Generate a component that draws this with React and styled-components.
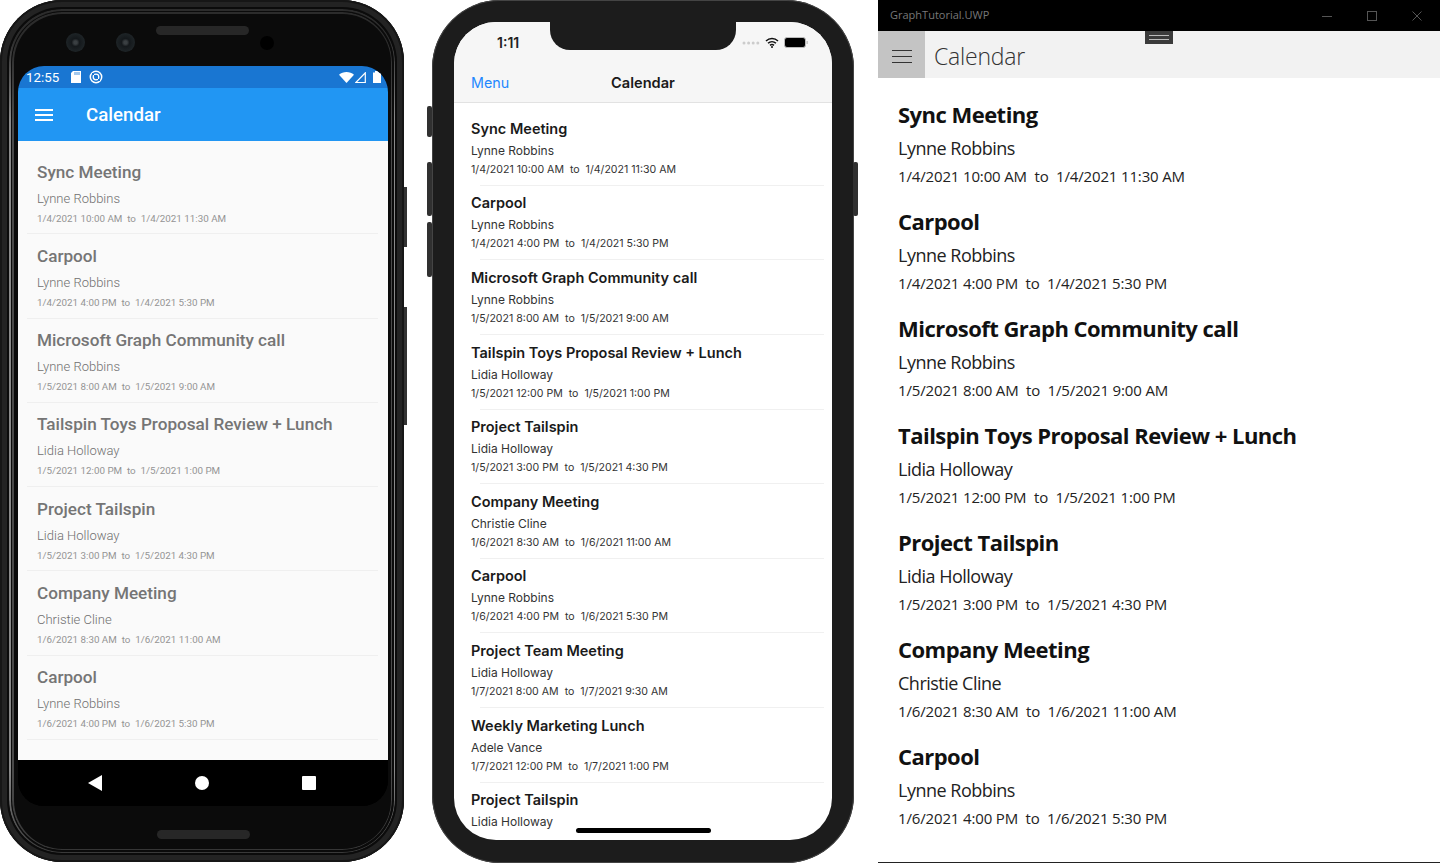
import React from "react";
import styled, { createGlobalStyle } from "styled-components";

const events = [
  ["Sync Meeting", "Lynne Robbins", "1/4/2021 10:00 AM", "1/4/2021 11:30 AM"],
  ["Carpool", "Lynne Robbins", "1/4/2021 4:00 PM", "1/4/2021 5:30 PM"],
  ["Microsoft Graph Community call", "Lynne Robbins", "1/5/2021 8:00 AM", "1/5/2021 9:00 AM"],
  ["Tailspin Toys Proposal Review + Lunch", "Lidia Holloway", "1/5/2021 12:00 PM", "1/5/2021 1:00 PM"],
  ["Project Tailspin", "Lidia Holloway", "1/5/2021 3:00 PM", "1/5/2021 4:30 PM"],
  ["Company Meeting", "Christie Cline", "1/6/2021 8:30 AM", "1/6/2021 11:00 AM"],
  ["Carpool", "Lynne Robbins", "1/6/2021 4:00 PM", "1/6/2021 5:30 PM"],
];
const iosEvents = [
  ...events,
  ["Project Team Meeting", "Lidia Holloway", "1/7/2021 8:00 AM", "1/7/2021 9:30 AM"],
  ["Weekly Marketing Lunch", "Adele Vance", "1/7/2021 12:00 PM", "1/7/2021 1:00 PM"],
  ["Project Tailspin", "Lidia Holloway", "", ""],
];

const Global = createGlobalStyle`
  html, body { margin: 0; padding: 0; background: #fff; }
  body { width: 1440px; height: 863px; overflow: hidden; }
  * { box-sizing: border-box; }
`;
const Page = styled.div`
  width: 1440px; height: 863px; display: flex; align-items: flex-start; background: #fff; overflow: hidden;
`;

/* ---------- Android ---------- */
const AndroidDevice = styled.div`
  position: relative; flex: none; width: 404px; height: 862px; border-radius: 62px;
  background: #0b0b0b; display: flex; flex-direction: column; padding: 0 16px 0 18px;
  box-shadow: inset 0 0 0 2px #161616, inset 0 0 0 7px #232323;
`;
const Rim = styled.div`
  position: absolute; pointer-events: none; inset: ${p => p.$inset}px; border-radius: ${p => 62 - p.$inset}px;
  padding: 1.5px;
  background: linear-gradient(to bottom, #2c2c2c 0, #2c2c2c 30px, ${p => p.$color} 110px, ${p => p.$color} 760px, #333 850px);
  -webkit-mask: linear-gradient(#000 0 0) content-box, linear-gradient(#000 0 0);
  mask: linear-gradient(#000 0 0) content-box, linear-gradient(#000 0 0);
  -webkit-mask-composite: xor;
  mask-composite: exclude;
`;
const AndroidKey = styled.div`
  position: absolute; left: 404px; width: 3px; background: #333;
  top: ${p => p.$top}px; height: ${p => p.$h}px;
`;
const CameraBar = styled.div`
  height: 66px; flex: none; position: relative;
  display: flex; align-items: flex-start; padding: 33px 0 0 48px;
`;
const Lens = styled.div`
  width: 19px; height: 19px; border-radius: 50%; margin-right: 31px; flex: none;
  background: radial-gradient(circle, #3a3f42 0 12%, #14181b 30%, #1e2427 70%, #15181a 100%);
`;
const Speaker = styled.div`
  width: 93px; height: 9px; border-radius: 5px; background: #272727; margin: -7px 0 0 -10px; flex: none;
`;
const FrontDot = styled.div`
  width: 14px; height: 14px; border-radius: 50%; background: #000; margin: 3px 0 0 11px; flex: none;
`;
const AndroidScreen = styled.div`
  width: 370px; height: 740px; flex: none; border-radius: 26px; overflow: hidden;
  display: flex; flex-direction: column; background: #000;
`;
const StatusBar = styled.div`
  height: 22px; flex: none; background: #1976d2; display: flex; align-items: center;
  padding: 0 7px 0 8px; color: #fff; font: 400 13.3px Roboto, sans-serif;
`;
const StatusIcons = styled.div`
  display: flex; align-items: center; gap: 8px; margin-left: 12px;
`;
const StatusRight = styled.div`
  display: flex; align-items: center; gap: 1px; margin-left: auto;
  & > svg:last-child { margin-left: 6px; }
`;
const Toolbar = styled.div`
  height: 53px; flex: none; background: #2196f3; display: flex; align-items: center;
  padding-left: 17px; gap: 33px; color: #fff; font: 500 18.7px Roboto, sans-serif;
`;
const AndroidList = styled.div`
  height: 619px; flex: none; background: #fafafa; padding: 9px 0 0 19px; overflow: hidden;
`;
const AndroidItem = styled.div`
  height: 84.25px; margin-right: 10px; border-bottom: 1px solid #efefef; margin-left: -10px;
  padding: 9.5px 0 0 10px; display: flex; flex-direction: column;
`;
const AndroidTitle = styled.div`
  font: 500 17.15px/25px Roboto, sans-serif; color: #757575; white-space: nowrap;
`;
const AndroidName = styled.div`
  font: 300 13px/18px Roboto, sans-serif; color: #6f6f6f; margin-top: 5px; white-space: nowrap;
`;
const AndroidDate = styled.div`
  font: 400 9.8px/14px Roboto, sans-serif; color: #949494; margin-top: 4px; white-space: pre;
`;
const NavBar = styled.div`
  height: 46px; flex: none; background: #000; display: flex; align-items: center; padding-left: 23.5px;
`;
const NavSlot = styled.div`
  width: 107px; display: flex; justify-content: center; flex: none;
`;
const ChinBar = styled.div`
  flex: 1; display: flex; justify-content: center; align-items: flex-start; padding-top: 24px;
`;
const ChinSpeaker = styled(Speaker)`margin: 0;`;

/* ---------- iPhone ---------- */
const IphoneSlot = styled.div`
  flex: none; margin-left: 28px; position: relative; width: 422px; height: 863px;
`;
const IphoneBody = styled.div`
  width: 422px; height: 863px; border-radius: 68px; background: #1c1c1c; padding: 22px;
  box-shadow: inset 0 0 0 1px #444;
`;
const SideKey = styled.div`
  position: absolute; width: 5px; background: #303030; border-radius: 2px;
  top: ${p => p.$top}px; height: ${p => p.$h}px;
  ${p => (p.$right ? "left: 421px;" : "left: -5px;")}
`;
const IphoneScreen = styled.div`
  position: relative; width: 378px; height: 818px; border-radius: 42px; overflow: hidden; background: #fff;
`;
const Notch = styled.div`
  position: absolute; left: 96px; top: 0; width: 186px; height: 28px; background: #1c1c1c;
  border-radius: 0 0 20px 20px;
`;
const IosHeader = styled.div`
  height: 81px; background: #f6f6f6; border-bottom: 1px solid #e2e2e2; display: flex; flex-direction: column;
`;
const IosStatus = styled.div`
  height: 41px; flex: none; display: flex; align-items: center; padding: 0 24px 0 43px;
  font: 600 14px Inter, sans-serif; color: #222;
`;
const IosStatusRight = styled.div`
  margin-left: auto; display: flex; align-items: center; gap: 5px;
`;
const IosNav = styled.div`
  flex: 1; position: relative; display: flex; align-items: center; justify-content: center;
  font: 600 14.6px Inter, sans-serif; color: #1a1a1a;
`;
const MenuLink = styled.span`
  position: absolute; left: 17px; top: 50%; transform: translateY(-50%); margin-top: -1px;
  font: 400 14.3px Inter, sans-serif; color: #1e88ff;
`;
const IosList = styled.div`
  padding-top: 13.8px;
`;
const IosItem = styled.div`
  height: 74.6px; padding-left: 17px; position: relative; display: flex; flex-direction: column;
`;
const IosDivider = styled.div`
  position: absolute; left: 26px; right: 8px; top: 68px; height: 1px; background: #f0f0f0;
`;
const IosTitle = styled.div`
  font: 600 14.5px/24px Inter, sans-serif; color: #1a1a1a; white-space: nowrap;
`;
const IosName = styled.div`
  font: 400 12px/16px Inter, sans-serif; color: #333; margin-top: 2px; white-space: nowrap;
`;
const IosDate = styled.div`
  font: 400 10.6px/14px Inter, sans-serif; color: #333; margin-top: 4px; white-space: pre;
`;
const HomeBar = styled.div`
  position: absolute; left: 122px; bottom: 7px; width: 135px; height: 5px; border-radius: 3px; background: #000;
`;

/* ---------- UWP ---------- */
const Win = styled.div`
  flex: none; margin-left: 24px; width: 562px; height: 863px; background: #fff; position: relative;
  display: flex; flex-direction: column; border-bottom: 1px solid #222;
`;
const TitleBar = styled.div`
  height: 31px; flex: none; background: #000; display: flex; align-items: center; padding: 0 1px 2px 12px;
  font: 400 11px "Open Sans", sans-serif; color: #777;
`;
const WinButtons = styled.div`
  margin-left: auto; display: flex; align-items: center; margin-bottom: -2px;
`;
const WinButton = styled.div`
  width: 45px; height: 31px; display: flex; align-items: center; justify-content: center;
`;
const WinHeader = styled.div`
  height: 47px; flex: none; background: #f2f2f2; display: flex; align-items: stretch;
`;
const HamburgerCell = styled.div`
  width: 47px; background: #c4c4c4; display: flex; align-items: center; justify-content: center; flex: none;
  padding-top: 3px;
`;
const WinHeading = styled.div`
  font: 300 23px/47px "Open Sans", sans-serif; color: #333; margin-left: 9px; padding-top: 2px; letter-spacing: -.2px;
`;
const DragHandle = styled.div`
  position: absolute; left: 267px; top: 31px; width: 28px; height: 13px; background: #3b3b3b;
  display: flex; align-items: center; justify-content: center;
  &::after { content: ""; width: 20px; height: 3px; border-top: 1px solid #bbb; border-bottom: 1px solid #bbb; }
`;
const WinList = styled.div`
  padding: 20px 0 0 20px;
`;
const WinItem = styled.div`
  height: 107px; display: flex; flex-direction: column;
`;
const WinTitle = styled.div`
  font: 700 22px/32px "Open Sans", sans-serif; color: #111; white-space: pre; letter-spacing: -.53px;
`;
const WinName = styled.div`
  font: 400 18px/26px "Open Sans", sans-serif; color: #222; margin-top: 5px; white-space: nowrap; letter-spacing: -.5px;
`;
const WinDate = styled.div`
  font: 400 15px/22px "Open Sans", sans-serif; color: #222; margin-top: 4px; white-space: pre; letter-spacing: -.15px;
`;

const Hamburger = ({ w, gap, stroke, color }) => (
  <svg width={w} height={gap * 2 + stroke} viewBox={`0 0 ${w} ${gap * 2 + stroke}`}>
    {[0, 1, 2].map(i => <rect key={i} x="0" y={i * gap} width={w} height={stroke} fill={color} />)}
  </svg>
);

export default function App() {
  return (
    <Page>
      <Global />
      <AndroidDevice>
        <Rim $inset={9} $color="#8a8a8a" />
        <Rim $inset={12} $color="#4a4a4a" />
        <AndroidKey $top={187} $h={60} />
        <AndroidKey $top={307} $h={118} />
        <CameraBar>
          <Lens /><Lens />
          <Speaker />
          <FrontDot />
        </CameraBar>
        <AndroidScreen>
          <StatusBar>
            12:55
            <StatusIcons>
              <svg width="10" height="12" viewBox="0 0 10 12"><path d="M2 0h8v12H0V2z" fill="#fff" /><path d="M4 1v3M6 1v3M8 1v3" stroke="#1976d2" strokeWidth=".8" /></svg>
              <svg width="14" height="14" viewBox="0 0 14 14"><circle cx="7" cy="7" r="5.7" fill="none" stroke="#fff" strokeWidth="1.5" /><circle cx="7" cy="7" r="2.8" fill="none" stroke="#fff" strokeWidth="1.3" /><path d="M3 3l8 8" stroke="#1976d2" strokeWidth="1" /></svg>
            </StatusIcons>
            <StatusRight>
              <svg width="15" height="11" viewBox="0 0 15 11"><path d="M0 2.8C4-.9 11-.9 15 2.8L7.5 11z" fill="#fff" /></svg>
              <svg width="11" height="11" viewBox="0 0 11 11"><path d="M10.300.8V10.500H.8z" fill="none" stroke="#fff" strokeWidth="1.200" /></svg>
              <svg width="8" height="12" viewBox="0 0 8 12"><path d="M0 1.500h2V0h4v1.500h2V12H0z" fill="#fff" /></svg>
            </StatusRight>
          </StatusBar>
          <Toolbar>
            <Hamburger w={18} gap={5} stroke={2} color="#fff" />
            Calendar
          </Toolbar>
          <AndroidList>
            {events.map((e, i) => (
              <AndroidItem key={i}>
                <AndroidTitle>{e[0]}</AndroidTitle>
                <AndroidName>{e[1]}</AndroidName>
                <AndroidDate>{e[2]}{"  to  "}{e[3]}</AndroidDate>
              </AndroidItem>
            ))}
          </AndroidList>
          <NavBar>
            <NavSlot><svg width="14" height="16" viewBox="0 0 14 16"><path d="M14 0v16L0 8z" fill="#fff" /></svg></NavSlot>
            <NavSlot><svg width="14" height="14" viewBox="0 0 14 14"><circle cx="7" cy="7" r="7" fill="#fff" /></svg></NavSlot>
            <NavSlot><svg width="14" height="14" viewBox="0 0 14 14"><rect width="14" height="14" rx="1" fill="#fff" /></svg></NavSlot>
          </NavBar>
        </AndroidScreen>
        <ChinBar><ChinSpeaker /></ChinBar>
      </AndroidDevice>

      <IphoneSlot>
        <SideKey $top={106} $h={31} />
        <SideKey $top={162} $h={54} />
        <SideKey $top={222} $h={55} />
        <SideKey $right $top={162} $h={54} />
        <IphoneBody>
          <IphoneScreen>
            <IosHeader>
              <IosStatus>
                1:11
                <IosStatusRight>
                  <svg width="18" height="4" viewBox="0 0 18 4">{[0, 1, 2, 3].map(i => <circle key={i} cx={2 + i * 4.6} cy="2" r="1.5" fill="#ccc" />)}</svg>
                  <svg width="14" height="11" viewBox="0 0 14 11"><path d="M1 4c3.300-3.200 8.700-3.200 12 0M3 6.300c2.300-2.200 5.700-2.200 8 0M5 8.400c1.200-1 2.800-1 4 0" fill="none" stroke="#111" strokeWidth="1.500" /><circle cx="7" cy="10" r="1" fill="#111" /></svg>
                  <svg width="24" height="11" viewBox="0 0 24 11"><rect x=".5" y=".5" width="21" height="10" rx="2.500" fill="#000" stroke="#bbb" /><rect x="22.500" y="4" width="1.300" height="3" fill="#bbb" /></svg>
                </IosStatusRight>
              </IosStatus>
              <IosNav>
                <MenuLink>Menu</MenuLink>
                Calendar
              </IosNav>
            </IosHeader>
            <Notch />
            <IosList>
              {iosEvents.map((e, i) => (
                <IosItem key={i}>
                  <IosTitle>{e[0]}</IosTitle>
                  <IosName>{e[1]}</IosName>
                  {e[2] && <IosDate>{e[2]}{"  to  "}{e[3]}</IosDate>}
                  {e[2] && <IosDivider />}
                </IosItem>
              ))}
            </IosList>
            <HomeBar />
          </IphoneScreen>
        </IphoneBody>
      </IphoneSlot>

      <Win>
        <TitleBar>
          GraphTutorial.UWP
          <WinButtons>
            <WinButton><svg width="10" height="10" viewBox="0 0 10 10"><path d="M0 5.500h10" stroke="#555" /></svg></WinButton>
            <WinButton><svg width="10" height="10" viewBox="0 0 10 10"><rect x=".5" y=".5" width="9" height="9" fill="none" stroke="#555" /></svg></WinButton>
            <WinButton><svg width="10" height="10" viewBox="0 0 10 10"><path d="M.5.500l9 9M9.500.500l-9 9" stroke="#555" /></svg></WinButton>
          </WinButtons>
        </TitleBar>
        <DragHandle />
        <WinHeader>
          <HamburgerCell><Hamburger w={20} gap={6} stroke={1} color="#333" /></HamburgerCell>
          <WinHeading>Calendar</WinHeading>
        </WinHeader>
        <WinList>
          {events.map((e, i) => (
            <WinItem key={i}>
              <WinTitle>{e[0]}</WinTitle>
              <WinName>{e[1]}</WinName>
              <WinDate>{e[2]}{"  to  "}{e[3]}</WinDate>
            </WinItem>
          ))}
        </WinList>
      </Win>
    </Page>
  );
}
